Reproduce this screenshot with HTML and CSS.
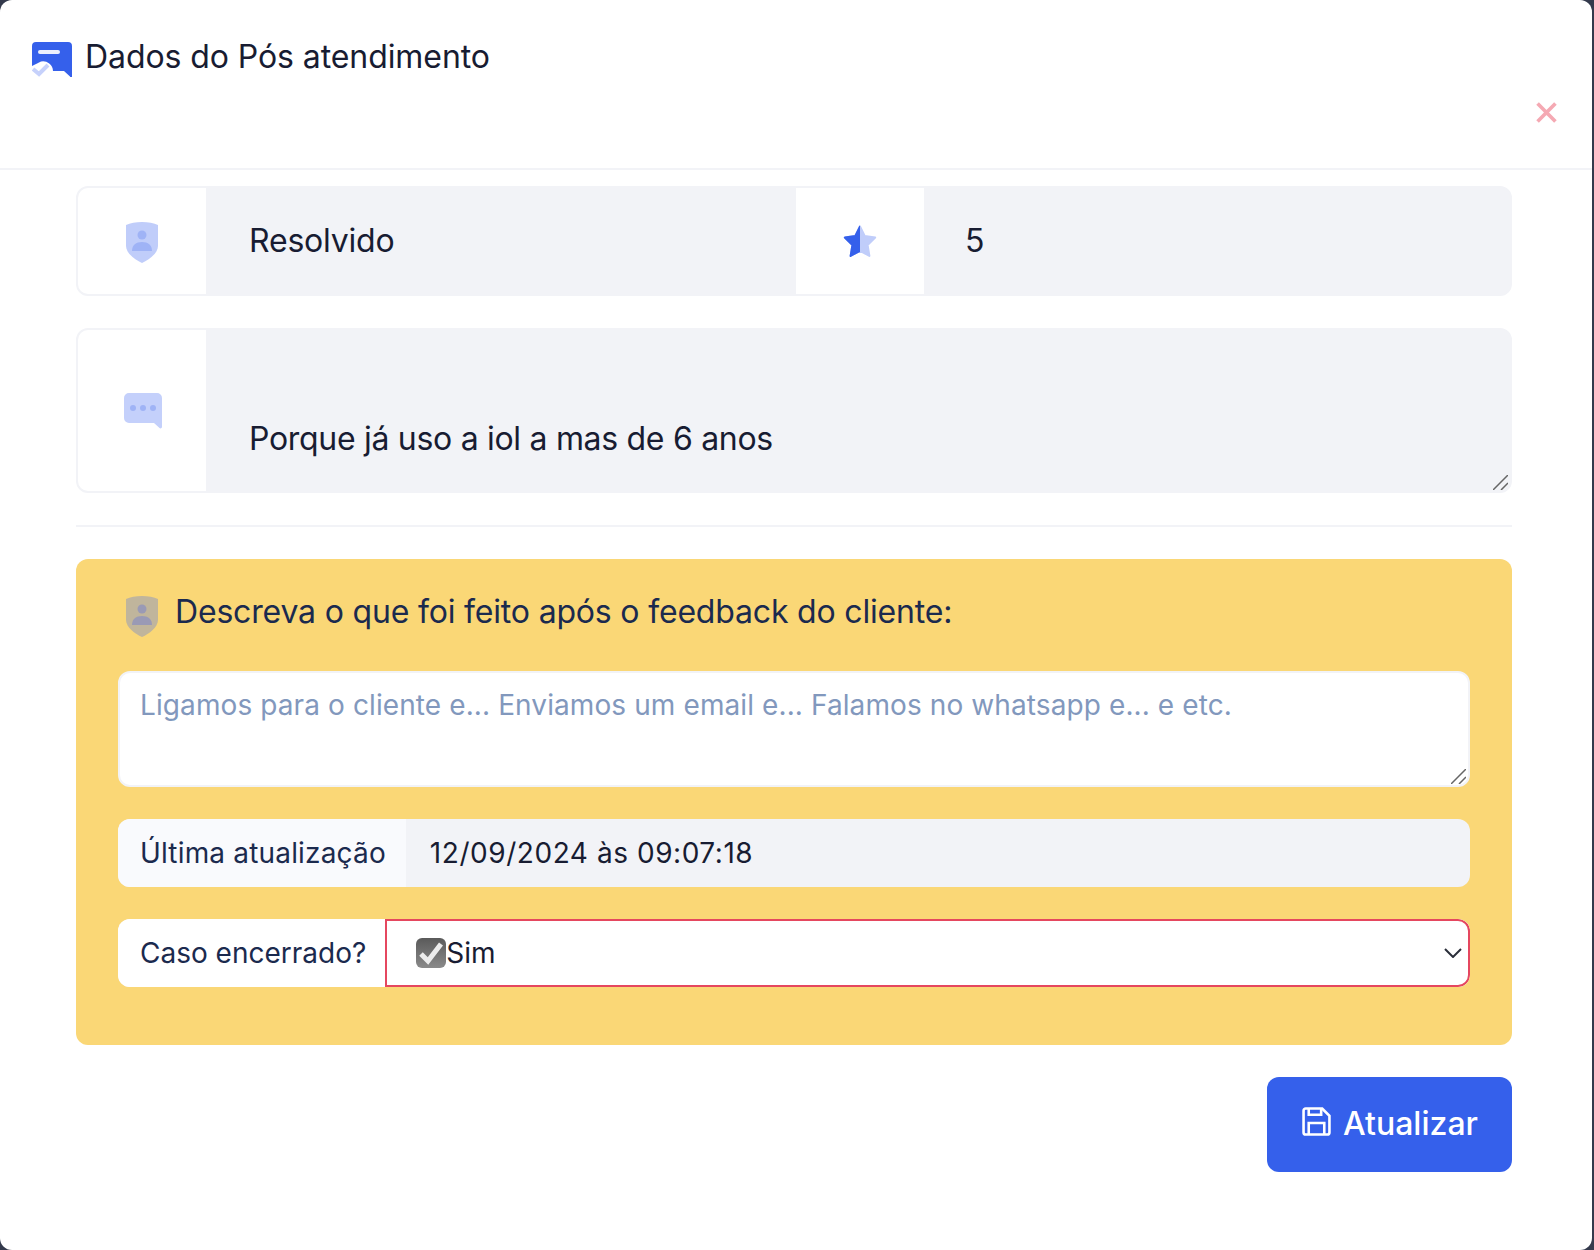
FILE: index.html
```html
<!DOCTYPE html>
<html lang="en">
<head>
  <meta charset="UTF-8" />
  <title>Dados do Pós atendimento</title>
  <meta name="viewport" content="width=device-width, initial-scale=1.0" />
  <link rel="stylesheet" href="styles.css">
</head>
<body>

<div class="modal">
  <div class="modal-header">
    <h2 class="modal-title">
      <svg class="title-icon" viewBox="0 0 40 35">
        <path fill="#3560eb" d="M4 0h32a4 4 0 0 1 4 4v30a1 1 0 0 1-2 .6L32 29H21a10 10 0 0 0-12-9.500L0 24V4a4 4 0 0 1 4-4z"/>
        <rect x="6" y="8" width="22" height="4" rx="2" fill="#fff" opacity=".9"/>
        <path fill="none" stroke="#c6d1fb" stroke-width="4" d="M1 27l6 5 9-9"/>
      </svg>
      Dados do Pós atendimento
    </h2>
    <svg class="close-icon" viewBox="0 0 20 20"><path d="M1.500 1.500l17 17M18.500 1.500l-17 17"/></svg>
  </div>

  <div class="modal-body">
    <div class="input-group row-short">
      <span class="addon">
        <svg class="icon-shield" viewBox="0 0 32 41">
          <path fill="#c0cdfa" d="M16 0c6 0 12 1 16 3v21c0 7-9 14-16 17C9 38 0 31 0 24V3c4-2 10-3 16-3z"/>
          <circle cx="16" cy="13" r="4.500" fill="#9fb3f6"/>
          <path fill="#9fb3f6" d="M6 29c0-6 4-9 10-9s10 3 10 9z"/>
        </svg>
      </span>
      <div class="field field-first">Resolvido</div>
      <span class="addon">
        <svg class="icon-star" viewBox="0 0 34 33">
          <defs>
            <clipPath id="star-left"><rect width="17" height="33"/></clipPath>
          </defs>
          <path fill="#c0cdfa" stroke="#c0cdfa" stroke-width="2" stroke-linejoin="round" d="M17 1.500L21.700 11 32.200 12.600 24.600 20 26.400 30.900 17 25.800 7.600 30.900 9.400 20 1.800 12.600 12.300 11z"/>
          <path fill="#3560eb" stroke="#3560eb" stroke-width="2" stroke-linejoin="round" clip-path="url(#star-left)" d="M17 1.500L21.700 11 32.200 12.600 24.600 20 26.400 30.900 17 25.800 7.600 30.900 9.400 20 1.800 12.600 12.300 11z"/>
        </svg>
      </span>
      <div class="field">5</div>
    </div>

    <div class="input-group row-tall">
      <span class="addon">
        <svg class="icon-chat" viewBox="0 0 38 36">
          <path fill="#c4d0fb" d="M5 0h28a5 5 0 0 1 5 5v29a1.500 1.500 0 0 1-2.500 1L30 30H5a5 5 0 0 1-5-5V5a5 5 0 0 1 5-5z"/>
          <circle cx="9" cy="15" r="3" fill="#9fb3f6"/>
          <circle cx="19" cy="15" r="3" fill="#9fb3f6"/>
          <circle cx="29" cy="15" r="3" fill="#9fb3f6"/>
        </svg>
      </span>
      <div class="area-wrap">
        <textarea class="field-area" readonly>

Porque já uso a iol a mas de 6 anos</textarea>
        <svg class="grip" viewBox="0 0 15 15"><path d="M0 15L15 0M8 15l7-7"/></svg>
      </div>
    </div>

    <hr class="divider">

    <div class="feedback-box">
      <div class="feedback-title">
        <svg class="icon-shield" viewBox="0 0 32 41">
          <path fill="#c0b59c" d="M16 0c6 0 12 1 16 3v21c0 7-9 14-16 17C9 38 0 31 0 24V3c4-2 10-3 16-3z"/>
          <circle cx="16" cy="13" r="4.500" fill="#9a9ab5"/>
          <path fill="#9a9ab5" d="M6 29c0-6 4-9 10-9s10 3 10 9z"/>
        </svg>
        <span class="feedback-text">Descreva o que foi feito após o feedback do cliente:</span>
      </div>

      <div class="area-wrap note-wrap">
        <textarea class="note" placeholder="Ligamos para o cliente e... Enviamos um email e... Falamos no whatsapp e... e etc."></textarea>
        <svg class="grip" viewBox="0 0 15 15"><path d="M0 15L15 0M8 15l7-7"/></svg>
      </div>

      <div class="small-group">
        <span class="small-label label-muted">Última atualização</span>
        <div class="small-value">12/09/2024 às 09:07:18</div>
      </div>

      <div class="small-group">
        <span class="small-label">Caso encerrado?</span>
        <div class="fake-select">
          <svg class="icon-check" viewBox="0 0 30 30">
            <defs>
              <linearGradient id="check-bg" x1="0" y1="0" x2="0" y2="1">
                <stop offset="0" stop-color="#5a5a5a"/>
                <stop offset="1" stop-color="#8a8a8a"/>
              </linearGradient>
            </defs>
            <rect width="30" height="30" rx="6" fill="url(#check-bg)"/>
            <path fill="none" stroke="#ececec" stroke-width="5" d="M5 16l7 7L25 6"/>
          </svg>Sim
          <svg class="chevron" viewBox="0 0 18 10"><path d="M1 1l8 8 8-8"/></svg>
        </div>
      </div>
    </div>

    <div class="actions">
      <button type="button" class="btn-save">
        <svg class="icon-save" viewBox="0 0 28 28">
          <path d="M3.500 1.500h16l7 7v16a2 2 0 0 1-2 2h-21a2 2 0 0 1-2-2v-21a2 2 0 0 1 2-2z"/>
          <path d="M6.500 1.500v6h12v-6M6.500 26.500v-11h15v11"/>
        </svg>
        Atualizar
      </button>
    </div>
  </div>
</div>

</body>
</html>
```

FILE: styles.css
```css
* {
  box-sizing: border-box;
}

body {
  margin: 0;
  height: 1250px;
  overflow: hidden;
  background: #343a4c;
  font-family: "Inter", "Liberation Sans", sans-serif;
  color: #181c32;
}

.modal {
  width: 1592px;
  height: 1250px;
  background: #fff;
  border-radius: 12px;
}

.modal-header {
  height: 170px;
  border-bottom: 2px solid #f2f3f7;
  padding: 0 32px;
  position: relative;
}

.modal-title {
  margin: 0;
  padding-top: 36px;
  display: flex;
  align-items: flex-start;
  gap: 13px;
  font-size: 32px;
  font-weight: 400;
  line-height: 42px;
  letter-spacing: -0.08px;
}

.title-icon {
  width: 40px;
  height: 35px;
  flex: none;
  margin-top: 6px;
}

.close-icon {
  position: absolute;
  right: 35px;
  top: 102px;
  width: 21px;
  height: 21px;
  fill: none;
  stroke: #f5a9b3;
  stroke-width: 3.500;
}

.modal-body {
  padding: 16px 80px 0 76px;
}

.input-group {
  display: flex;
  border: 2px solid #f2f3f7;
  border-radius: 12px;
  background: #f2f3f7;
  overflow: hidden;
}

.row-short {
  height: 110px;
}

.row-tall {
  height: 165px;
  margin-top: 32px;
}

.addon {
  flex: none;
  width: 128px;
  background: #fff;
  display: flex;
  align-items: center;
  justify-content: center;
}

.addon .icon-shield {
  margin-top: 2px;
}

.field {
  flex: 1;
  display: flex;
  align-items: center;
  padding: 0 0 2px 41px;
  font-size: 32px;
  color: #181c32;
}

.field-first {
  flex: none;
  width: 590px;
  padding-left: 43px;
  letter-spacing: -0.2px;
}

.area-wrap {
  flex: 1;
  position: relative;
}

.field-area {
  display: block;
  width: 100%;
  height: 100%;
  background: #f2f3f7;
  border: none;
  outline: none;
  font-family: inherit;
  font-size: 32px;
  letter-spacing: -0.3px;
  color: #181c32;
  line-height: 48px;
  padding: 37px 20px 0 43px;
  resize: none;
}

.grip {
  position: absolute;
  right: 2px;
  bottom: 1px;
  width: 15px;
  height: 15px;
  fill: none;
  stroke: #666;
  stroke-width: 1.500;
}

.icon-shield {
  width: 32px;
  height: 41px;
  flex: none;
}

.icon-star {
  width: 34px;
  height: 33px;
}

.icon-chat {
  width: 38px;
  height: 36px;
  margin-left: 2px;
}

.divider {
  border: none;
  border-top: 2px solid #f2f3f7;
  margin: 32px 0;
}

.feedback-box {
  height: 486px;
  background: #fad776;
  border-radius: 12px;
  padding: 37px 42px;
}

.feedback-title {
  display: flex;
  align-items: flex-start;
  gap: 17px;
  padding-left: 8px;
  font-size: 32px;
  color: #1b2a4e;
  height: 41px;
}

.feedback-text {
  letter-spacing: -0.18px;
  line-height: 32px;
}

.note-wrap {
  height: 116px;
  margin-top: 34px;
}

.note {
  display: block;
  width: 100%;
  height: 100%;
  border: 2px solid #f2f3f7;
  border-radius: 12px;
  padding: 12px 20px;
  font-family: inherit;
  font-size: 28px;
  letter-spacing: 0.1px;
  line-height: 40px;
  outline: none;
  resize: none;
}

.note::placeholder {
  color: #8298bd;
}

.note-wrap .grip {
  right: 4px;
  bottom: 3px;
}

.small-group {
  display: flex;
  height: 68px;
  margin-top: 32px;
  border-radius: 12px;
  background: #f2f3f7;
  overflow: hidden;
  font-size: 28px;
}

.small-label {
  flex: none;
  display: flex;
  align-items: center;
  padding: 0 19px 0 22px;
  background: #fff;
  color: #1b2a4e;
}

.label-muted {
  background: #f9fafd;
  padding-right: 20px;
  letter-spacing: 0.17px;
}

.small-value {
  flex: 1;
  display: flex;
  align-items: center;
  padding-left: 24px;
  letter-spacing: 0.55px;
  color: #181c32;
}

.fake-select {
  flex: 1;
  display: flex;
  align-items: center;
  padding-left: 29px;
  background: #fff;
  border: 2px solid #e5475f;
  border-radius: 0 12px 12px 0;
  color: #181c32;
}

.icon-check {
  width: 30px;
  height: 30px;
}

.chevron {
  margin-left: auto;
  margin-right: 6px;
  width: 18px;
  height: 10px;
  fill: none;
  stroke: #2b2f3a;
  stroke-width: 2;
}

.actions {
  display: flex;
  justify-content: flex-end;
  margin-top: 32px;
}

.btn-save {
  display: flex;
  align-items: center;
  justify-content: center;
  gap: 12px;
  width: 245px;
  height: 95px;
  border: none;
  border-radius: 12px;
  padding: 0 0 2px;
  background: #3560eb;
  color: #fff;
  font-family: inherit;
  font-size: 32px;
  font-weight: 500;
}

.icon-save {
  width: 29px;
  height: 29px;
  margin: 0 0 4px 1px;
  fill: none;
  stroke: #fff;
  stroke-width: 2.500;
}
```
